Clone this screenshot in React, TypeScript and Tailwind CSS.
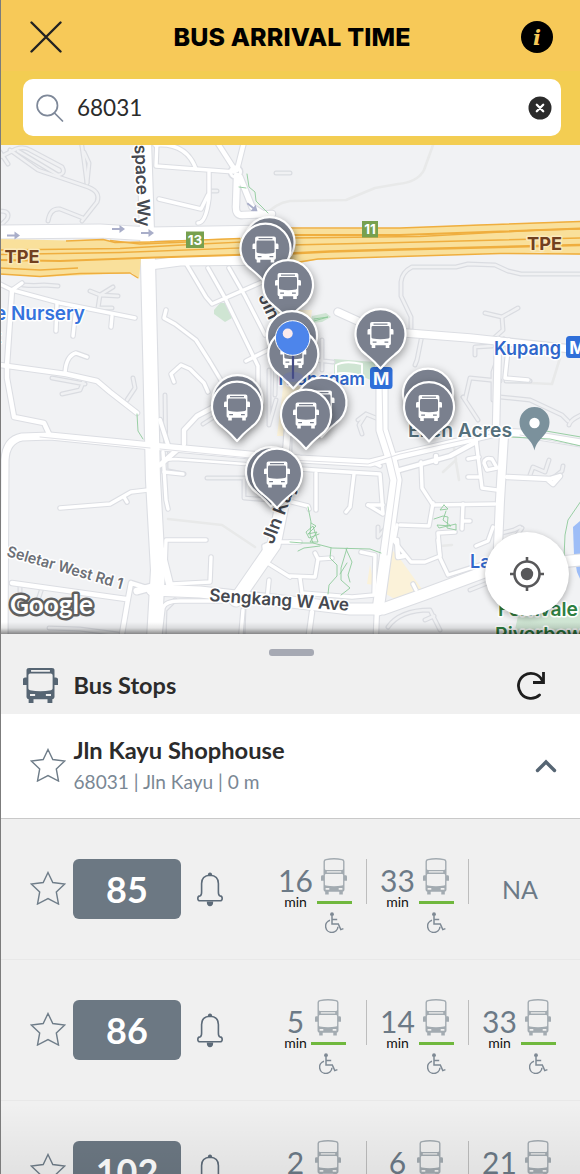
import React from "react";

type Road = { d: string; w: number };

const lanes: string[] = [
  "M0 157 L16 149 Q24 146 30 150 L62 167 Q66 174 58 175 L18 151",
  "M10 150 L38 170 L88 187 Q101 192 97 202 L82 221",
  "M48 221 Q50 208 60 209 L83 218",
  "M81 140 L84 160 L87 183",
  "M84 152 L89 163 L87 183",
  "M0 152 L8 164",
  "M0 211 Q11 211 7 219 L0 226",
  "M23 285 Q34 286 44 285 L58 286",
  "M90 291 L100 295 L118 296 M113 287 L100 295 L98 308 L112 308",
  "M52 378 L85 384 M62 394 L80 390 L85 378",
  "M133 378 L135 388 L127 400",
  "M276 173 L290 173",
  "M209 191 L217 191",
  "M581 274 L521 274 L508 271 L495 265 L468 264 L456 267 L412 267 Q402 272 401 282 L401 296 L411 317 L411 330",
  "M485 313 L502 317 L518 308 M502 317 L503 330 L494 338",
  "M422 335 L417 360 L415 365",
  "M475 355 L475 347 L492 346",
  "M504 339 L520 350",
  "M465 400 L470 378 L500 381 M463 397 L478 420",
  "M502 346 L493 372 L493 400",
  "M506 381 L530 381 M500 397 L530 400 L562 415 L568 421",
  "M358 420 L366 414 L376 418 M366 414 L359 425 L362 434",
  "M530 475 L533 467 L545 472 L549 460 M552 479 L562 471 L563 466",
  "M378 527 L378 537 L384 530",
  "M165 395 L166 470 M163 470 L184 474",
  "M207 478 L245 478 M244 480 L244 498 L270 500",
  "M276 400 L269 425 M269 370 L269 425 M276 360 L275 395",
  "M315 360 L333 362 M322 340 L322 370",
  "M388 627 Q400 610 430 610 L440 630 M425 620 L434 616",
  "M49 628 L80 629 L118 634 M20 584 L20 597 M42 588 L38 600",
  "M470 590 L500 578 M515 538 L522 528",
  "M290 421 L290 455 M233 405 L203 424",
  "M243 634 L244 607 M164 640 L165 610 L175 600",
  "M569 425 Q570 420 581 415",
  "M502 533 L514 530 L520 527",
];

const roads: Road[] = [
  { d: "M157 140 L156 166 L235 172", w: 3 },
  { d: "M155 145 Q186 142 196 169", w: 3 },
  { d: "M209 172 L209 198 Q206 223 198 223", w: 3 },
  { d: "M159 199 L201 209 L208 195", w: 3 },
  { d: "M217 142 L235 170", w: 4 },
  { d: "M244 142 L237 170", w: 4 },
  { d: "M237 176 L236 205 Q235 216 243 215 L272 214", w: 6 },
  { d: "M240 177 L252 207 L270 218", w: 5 },
  { d: "M187 265 L206 297 L212 304 L262 282", w: 3 },
  { d: "M208 268 L225 298 L258 366 L258 400", w: 3 },
  { d: "M229 268 L245 296 L265 335", w: 3 },
  { d: "M246 361 L270 349", w: 3 },
  { d: "M166 310 L164 318 L175 324 L196 340 L210 362 L222 382", w: 3 },
  { d: "M174 382 L171 374 L181 365 L190 369 L204 383 L208 392", w: 3 },
  { d: "M0 284 L12 290 L60 303 L135 318", w: 3 },
  { d: "M12 290 L7 365 L7 378 L14 417 L44 423 L50 436", w: 4 },
  { d: "M12 290 L22 283", w: 3 },
  { d: "M57 303 L56 331 M76 308 L73 336 M112 316 L111 327", w: 3 },
  { d: "M0 365 L66 374 L97 381 L110 392 L137 413", w: 4 },
  { d: "M65 373 Q66 356 76 353 L87 357", w: 3 },
  { d: "M60 508 L110 504 L131 492 L148 490 M124 497 L127 502", w: 3 },
  { d: "M163 452 L166 500 L168 509", w: 3 },
  { d: "M164 472 L183 474", w: 3 },
  { d: "M165 568 L166 540 L206 540", w: 3 },
  { d: "M211 557 L210 582 L172 584", w: 3 },
  { d: "M12 583 L126 599 M131 583 L128 599 L122 634 M131 583 L150 589", w: 4 },
  { d: "M184 444 L184 430 L197 416 L214 407", w: 4 },
  { d: "M160 634 L163 608 Q165 601 180 601 L225 601", w: 3 },
  { d: "M243 610 L241 634", w: 3 },
  { d: "M165 460 L175 459 L245 464", w: 2 },
  { d: "M338 312 L380 331 L470 338 L581 350", w: 7 },
  { d: "M498 340 L496 430", w: 6 },
  { d: "M509 340 L505 378 L528 380", w: 3 },
  { d: "M316 473 L316 510 M354 474 L350 507 L346 512", w: 3 },
  { d: "M300 469 L330 471 L380 474 L383 514 L368 505", w: 3 },
  { d: "M421 462 L422 488 L433 505 L495 504", w: 3 },
  { d: "M400 525 L429 526 L433 503", w: 3 },
  { d: "M463 504 L462 529 M463 521 L470 521", w: 3 },
  { d: "M397 525 L394 541 L411 562 L425 562 L440 556 L438 533 L455 532", w: 3 },
  { d: "M438 540 L440 558 L448 575 L480 565", w: 3 },
  { d: "M397 540 L398 557 L404 556", w: 4 },
  { d: "M376 464 L380 466", w: 3 },
  { d: "M396 471 L450 456 L476 442 M436 456 L436 462", w: 4 },
  { d: "M476 440 L482 488 L497 490 M468 459 L479 457 M468 477 L480 477", w: 3 },
  { d: "M507 477 L550 479 L560 476 L553 484 L547 479", w: 4 },
  { d: "M484 463 Q485 457 492 459 L497 468 L487 470 Z", w: 3 },
  { d: "M476 546 L488 541 L493 527", w: 3 },
  { d: "M290 542 L300 542 M315 553 L318 559 L315 577 L290 576 M318 559 L332 558", w: 3 },
  { d: "M361 552 L375 555 L374 595 L352 597 L302 593 L300 578", w: 3 },
  { d: "M264 546 L266 562 L290 577 M266 545 L275 542 L290 542 M267 600 L269 580", w: 3 },
  { d: "M312 612 L309 634 M377 608 L376 634", w: 4 },
  { d: "M368 505 L383 505", w: 3 },
  { d: "M284 500 L308 506 L309 509", w: 3 },
  { d: "M416 590 L413 584", w: 3 },
];

const avenues: Road[] = [
  { d: "M4 640 L5 460 Q6 440 22 437 L50 436 L152 446 L250 455 L300 459 L370 463 L398 456 L500 432 L520 433 L581 443", w: 7 },
  { d: "M160 420 L168 445", w: 4 },
  { d: "M160 465 L178 449", w: 5 },
  { d: "M382 380 L382 430 L390 455 L396 480 L385 560 L378 610", w: 11 },
  { d: "M283 500 L274 545 L236 600", w: 13 },
  { d: "M288 425 L283 490", w: 6 },
  { d: "M152 590 L200 592 L300 603 L350 609 L383 609 L425 594 L495 568 L581 560", w: 11 },
  { d: "M504 435 L500 500 L497 570", w: 8 },
  { d: "M155 586 L137 591 M161 550 L170 586", w: 7 },
  { d: "M144 140 L148 262 L151 390 L153 480 L158 570 L154 640", w: 14 },
  { d: "M0 232 L100 231 L150 234 L270 232", w: 13 },
  { d: "M150 265 L180 261 L270 260", w: 9 },
];

const greens: string[] = [
  "M247 174 L249 187 L255 192 L256 201 L268 213 M239 187 L246 188",
  "M137 414 L138 431 L143 439",
  "M308 507 L311 522 L310 535 L313 543 L332 548 L370 549 L381 553",
  "M311 523 L316 526 L308 534 L317 532 L310 542 L318 542 L313 526 L306 532 L309 538 L319 534",
  "M290 542 L303 543 L313 543 M298 551 L304 548 L320 546",
  "M331 548 L330 558 L337 565 L337 576 L329 585 L328 594 M347 548 L341 568 L341 580 L350 588 L341 595 M346 549 L352 562 L348 575 L350 582 M340 574 L347 563",
  "M444 505 L440 510 L448 509 L444 505 M446 511 L443 520 L451 526 L437 525 L439 528 L456 524 L456 530 L447 528 L448 517 L443 516 L434 519",
  "M581 501 L568 520 L565 535 L564 558 M510 437 L550 439 L581 446 M540 430 L581 437",
  "M314 319 L328 317 L314 321",
];

const busPath =
  "M4.5 0H21.5Q23.4 0 23.4 1.8V7H24.4Q26 7 26 8.4V12.6H23.4V21.6Q23.4 23.2 21.8 23.2V26H18.2V23.2H7.8V26H4.200V23.2Q2.6 23.2 2.6 21.6V12.6H0V8.4Q0 7 1.6 7H2.6V1.8Q2.6 0 4.5 0ZM6 1.5V2.7H20V1.5ZM5.400 4Q4 4 4 5.400V15.200Q4 16.200 5.200 16.500Q13 18 20.800 16.500Q22 16.200 22 15.200V5.400Q22 4 20.600 4ZM5.2 19.4V20.8H9V19.4ZM17 19.4V20.8H20.8V19.4Z";

const pins: [number, number, boolean][] = [
  [269.5, 242, false],
  [265.5, 248.5, true],
  [288, 285, true],
  [292, 336, false],
  [293.3, 354, true],
  [380.5, 334, true],
  [237.5, 400, false],
  [237, 406.5, true],
  [321.5, 402.5, true],
  [306, 414.5, true],
  [428, 393.5, false],
  [429, 407, true],
  [271, 472, false],
  [277, 473.5, true],
];

function Pin({ x, y, bus }: { x: number; y: number; bus: boolean }) {
  return (
    <g transform={`translate(${x} ${y})`} className="drop-shadow-[1px_3px_4px_rgba(0,0,0,0.35)]">
      <path
        d="M0 34.5 L-6 28 Q-9 25 -14.5 20.5 A25 25 0 1 1 14.5 20.5 Q9 25 6 28 Z"
        fill="#7a808e"
        stroke="#fff"
        strokeWidth="2.2"
        strokeLinejoin="round"
      />
      {bus && <path d={busPath} transform="translate(-13 -12)" fill="#fff" fillRule="evenodd" />}
    </g>
  );
}

function MapLabel(props: React.SVGProps<SVGTextElement>) {
  return (
    <text
      fontFamily="Inter, 'Liberation Sans', sans-serif"
      fontWeight={600}
      fontSize={18}
      stroke="#fff"
      strokeWidth={3}
      strokeLinejoin="round"
      paintOrder="stroke"
      lengthAdjust="spacingAndGlyphs"
      {...props}
    />
  );
}

function Arrow({ x, y, r = 0 }: { x: number; y: number; r?: number }) {
  return (
    <g transform={`translate(${x} ${y}) rotate(${r})`} fill="#a9aec9">
      <path d="M-6 -0.9H1.5V-4L7 0L1.5 4V0.9H-6Z" />
    </g>
  );
}

function StreetMap() {
  return (
    <svg viewBox="0 145 580 489" width="580" height="489" className="block" fill="none" strokeLinecap="round" strokeLinejoin="round">
      <rect x="0" y="145" width="580" height="489" fill="#f1f2f4" />
      <g fill="#cfe5d3">
        <path d="M214 310 L220 303 L226 303 L232 318 L225 322 L214 314Z" />
        <path d="M312 316 L326 313 L331 317 L322 322 L310 323Z" />
        <path d="M334 359 L375 362 L375 382 L366 378 L334 374Z" />
        <path d="M518 616 L581 606 V634 H514Z" />
      </g>
      <g fill="#fbf2d9">
        <path d="M268 310 H312 L300 400 L285 436 H277 L284 380Z" />
        <path d="M389 547 L398 556 L424 592 L398 601 L386 594Z M370 565 L374 585 L367 584Z" />
      </g>
      <path d="M573 527 L581 520 V581 L577 572 L574 555Z" fill="#9dbdf7" />
      <g strokeWidth="2.6" stroke="#e8e9e9">
        <path d="M433 145 L424 170 Q418 182 398 184 L375 188 L346 200 L290 201 Q275 203 262 218" />
        <path d="M168 519 L222 525 L255 547" />
        <path d="M454 448 L456 460 L443 472 M456 462 L459 480" />
        <path d="M560 358 L552 384 L508 382 M440 546 L452 545" />
      </g>
      <g strokeWidth="5" stroke="#dadce1">
        {lanes.map((d) => <path key={d} d={d} />)}
      </g>
      <g strokeWidth="2.6" stroke="#f0f1f3">
        {lanes.map((d) => <path key={d} d={d} />)}
      </g>
      <g stroke="#dcdee3">
        {roads.map((r) => <path key={r.d} d={r.d} strokeWidth={r.w + 2.6} />)}
        <circle cx="235.5" cy="172" r="5" strokeWidth="6" />
        {avenues.map((r) => <path key={r.d} d={r.d} strokeWidth={r.w + 2.2} />)}
      </g>
      <g stroke="#fff">
        {roads.map((r) => <path key={r.d} d={r.d} strokeWidth={r.w + 0.4} />)}
        <circle cx="235.5" cy="172" r="5" strokeWidth="3" />
        {avenues.map((r) => <path key={r.d} d={r.d} strokeWidth={r.w} />)}
      </g>
      <g stroke="#e0e1e6" strokeWidth="1">
        <path d="M40 437 L150 448 M160 449 L250 458 L368 464 L400 454 L495 433" />
        <path d="M382 382 L383 430 L391 455 L397 480 L387 555 M520 435 L580 446" />
      </g>
      <path d="M336 374 V365 Q345 360 362 364 V376 Q345 371 336 374Z" stroke="#fff" strokeWidth="2" />
      <g stroke="#8fcb9b" strokeWidth="0.9">
        {greens.map((d) => <path key={d} d={d} />)}
      </g>

      <path
        d="M0 239 L70 240.5 L103 239 L115 242.5 L240 238 L270 229 L400 228 L470 225 L581 221 V255 L540 252.5 L380 257 L315 260 L300 263 L270 254 L155 258 L141 258.5 L139 279 L132 273 L40 277 L0 274Z"
        fill="#f9e09b"
      />
      <g stroke="#efae3f" strokeWidth="1.4" strokeLinecap="butt">
        <path d="M66 241 L103 239.5 L115 242.5 L150 242 L240 238.5" />
        <path d="M0 250 L120 248.5 L200 244 L265 241" />
        <path d="M0 254.5 L120 252.5 L265 247" />
        <path d="M0 260 L60 261 L140 258 L250 254.5" strokeWidth="2" />
        <path d="M0 274 L40 276.5 L80 273.5 L130 273 L138 278" />
        <path d="M0 268 L40 270 L78 268" />
        <path d="M110 240.5 L140 244 L200 241.5" />
        <path d="M290 228 L400 228 L480 225 L581 221.5" />
        <path d="M290 235 L400 235 L500 231.5 L581 228.5" strokeWidth="2" />
        <path d="M290 238 L420 236.5 L540 230 L581 229" />
        <path d="M290 245 L380 243 L500 240 L581 238" />
        <path d="M290 253.5 L330 251.5 L400 249.5 L500 247 L581 245" strokeWidth="2.4" />
        <path d="M296 262.5 L318 259 L400 256.5 L500 253.5 L581 254" />
      </g>

      <Arrow x={13} y={235.5} />
      <Arrow x={118} y={229} />
      <Arrow x={147} y={233} />
      <Arrow x={252} y={207} r={38} />

      <g fontFamily="Inter, 'Liberation Sans', sans-serif" fontWeight="700" fontSize="13.5" textAnchor="middle">
        <rect x="186" y="231.5" width="18" height="16.5" fill="#77a04e" />
        <text x="195" y="244.7" fill="#fff">13</text>
        <rect x="362" y="221" width="16" height="16.5" fill="#77a04e" />
        <text x="370" y="234.2" fill="#fff">11</text>
      </g>
      <g fill="#71401f">
        <MapLabel x={4.5} y={262.5} fontWeight={700} fontSize={18} stroke="#fbeabb" textLength={35}>TPE</MapLabel>
        <MapLabel x={527} y={249.5} fontWeight={700} fontSize={18} stroke="#fbeabb" textLength={35}>TPE</MapLabel>
      </g>
      <MapLabel transform="translate(134.5 145) rotate(87.5)" fill="#45484f" fontSize={17.5} textLength={82}>space Wy</MapLabel>
      <g fill="#3573dd">
        <MapLabel x={-5} y={320} textLength={90} fontSize={19}>e Nursery</MapLabel>
        <MapLabel x={-5} y={343}>t</MapLabel>
      </g>
      <g fill="#3067cb">
        <MapLabel x={494} y={354.5} textLength={67} fontSize={18.5}>Kupang</MapLabel>
        <MapLabel x={275} y={385} textLength={90} fontSize={18}>Thanggam</MapLabel>
        <MapLabel x={470} y={568}>Layar</MapLabel>
      </g>
      <g fontFamily="Inter, 'Liberation Sans', sans-serif" fontWeight="700" fontSize="17.5" textAnchor="middle">
        <rect x="370" y="367" width="22.5" height="22" rx="3.5" fill="#2f6fd9" />
        <text x="381.2" y="384.5" fill="#fff">M</text>
        <rect x="566" y="336" width="22.5" height="22" rx="3.5" fill="#2f6fd9" />
        <text x="577.5" y="353.5" fill="#fff">M</text>
      </g>
      <MapLabel x={408} y={436.5} fill="#55707c" textLength={104} fontSize={19}>Ellen Acres</MapLabel>
      <path d="M534.500 450.500 C532 438 519.500 435 519.500 422 A15 15 0 0 1 549.500 422 C549.500 435 537 438 534.500 450.500Z" fill="#7b919c" />
      <circle cx="534.500" cy="423" r="5.200" fill="#fff" />
      <MapLabel transform="translate(6 556) rotate(16)" fill="#6c7077" fontSize={15} textLength={120}>Seletar West Rd 1</MapLabel>
      <MapLabel transform="translate(209 601) rotate(4)" fill="#45484f" fontSize={17.5} textLength={140}>Sengkang W Ave</MapLabel>
      <MapLabel transform="translate(273 545) rotate(-69)" fill="#45484f" fontSize={18} textLength={76}>Jln Kayu</MapLabel>
      <MapLabel transform="translate(258 297) rotate(65)" fill="#45484f" fontSize={18}>Jln</MapLabel>
      <g fill="#2f7f42">
        <MapLabel x={498} y={616} textLength={80} fontSize={19}>Fernvale</MapLabel>
        <MapLabel x={495} y={641} textLength={88} fontSize={19}>Riverbow</MapLabel>
      </g>
      <text x="10" y="613.5" fontFamily="Lato, sans-serif" fontWeight="700" fontSize="26.500" fill="#fff" stroke="#5f5f5f" strokeWidth="5" paintOrder="stroke" textLength="83" lengthAdjust="spacingAndGlyphs">
        Google
      </text>

      {pins.map(([x, y, bus]) => <Pin key={`${x}-${y}`} x={x} y={y} bus={bus} />)}

      <ellipse cx="293" cy="377" rx="10" ry="5" fill="#6370b5" opacity="0.35" />
      <path d="M293 354 V378" stroke="#454c86" strokeWidth="2.200" />
      <circle cx="292.700" cy="338" r="17.300" fill="#4d85eb" stroke="#fff" strokeWidth="1" />
      <circle cx="287.700" cy="333.500" r="5" fill="#fbeaec" />
    </svg>
  );
}

function BusIcon() {
  return (
    <svg viewBox="0 0 26 26" className="h-[35px] w-[35px]" fill="#566573" fillRule="evenodd">
      <path d={busPath} />
    </svg>
  );
}

function Star() {
  return (
    <svg viewBox="0 0 36 34" className="mb-[2px] h-[34px] w-[36px]" fill="none" stroke="#6f7d89" strokeWidth="1.4">
      <path d="M18 1.500 L22.800 11.500 L34.700 13 L26.300 21 L28.500 33 L18 27.600 L7.500 33 L9.700 21 L1.300 13 L13.200 11.500Z" />
    </svg>
  );
}

function Bell() {
  return (
    <svg viewBox="0 0 26 35" className="h-[35px] w-[26px]" fill="none" stroke="#5d6b79" strokeWidth="1.600">
      <path d="M4.600 20V11.500Q4.600 3.600 13 3.200Q21.400 3.600 21.400 11.500V20Q21.400 23.700 23 23.900Q25.200 24.100 25.200 26.500Q25.200 28.800 23 28.800H3Q0.800 28.800 0.800 26.500Q0.800 24.100 3 23.900Q4.600 23.700 4.600 20Z" />
      <path d="M10.800 3.300Q10.800 0.400 13 0.400Q15.200 0.400 15.200 3.300Z M9.800 29.400H16.200Q16.200 34.200 13 34.200Q9.800 34.200 9.800 29.400Z" fill="#5d6b79" stroke="none" />
    </svg>
  );
}

function DoubleDecker() {
  return (
    <svg viewBox="0 0 26 37" className="h-[37px] w-[26px]" fill="#a3abb1" fillRule="evenodd">
      <path d="M4.800 1Q13 -0.800 21.200 1Q23.500 1.400 23.500 3.600V17.300H24.600Q26 17.300 26 18.700V22.800H23.500V31.500Q23.500 33.500 21.800 33.700V36.500H18.300V33.700H7.700V36.500H4.200V33.700Q2.500 33.500 2.500 31.500V22.800H0V18.700Q0 17.300 1.400 17.300H2.500V3.600Q2.500 1.400 4.800 1ZM5.200 2.200Q3.900 2.500 3.900 3.700V10.800Q3.900 12 5.200 12H20.800Q22.100 12 22.100 10.800V3.700Q22.100 2.500 20.800 2.200Q13 0.800 5.200 2.200ZM5.800 13.300V14.500H20.200V13.300ZM5 16Q3.900 16 3.900 17.100V26.500Q3.900 27.400 5 27.600Q13 28.800 21 27.600Q22.100 27.400 22.100 26.500V17.100Q22.100 16 21 16ZM4.600 30V31.800H8.300V30ZM17.700 30V31.800H21.400V30Z" />
    </svg>
  );
}

function Wheelchair() {
  return (
    <svg viewBox="0 0 19 21" className="h-[21px] w-[19px]" fill="none" stroke="#7e8994" strokeWidth="1.500">
      <circle cx="7" cy="2.200" r="1.900" fill="#7e8994" stroke="none" />
      <path d="M7 4V12H13.300L15.800 17.600L18.400 16.600 M7.300 7.600H12.200" />
      <path d="M5 8.300A6.200 6.200 0 1 0 13 14.800" />
    </svg>
  );
}

function Arrival({ minutes, last }: { minutes: number | null; last: boolean }) {
  return (
    <div className="relative flex h-[78px] w-[102px] items-start justify-center">
      {minutes === null ? (
        <span className="pt-[14px] text-[25px] leading-[32px] text-[#6c7a87]">NA</span>
      ) : (
        <div className="flex gap-1 pr-[2px]">
          <div className="flex flex-col items-center pt-[6px]">
            <span className="text-[30px] leading-[30px] text-[#6c7a87]">{minutes}</span>
            <span className="text-[14px] leading-[14px] text-[#111]">min</span>
          </div>
          <div className="flex w-[35px] flex-col items-center">
            <div className="-mt-px">
              <DoubleDecker />
            </div>
            <div className="mt-[6px] h-[3px] w-full bg-[#70b83e]" />
            <div className="mt-[8px]">
              <Wheelchair />
            </div>
          </div>
        </div>
      )}
      {!last && <div className="absolute top-0 right-0 h-[45px] w-[1.5px] bg-[#bdbdbd]" />}
    </div>
  );
}

const services: { no: string; next: (number | null)[] }[] = [
  { no: "85", next: [16, 33, null] },
  { no: "86", next: [5, 14, 33] },
  { no: "102", next: [2, 6, 21] },
];

export default function App() {
  return (
    <div className="relative flex h-[1174px] w-[580px] flex-col overflow-hidden bg-[#f0f0f0] font-[Lato,sans-serif] text-[#2b2b2b]">
      <header className="flex h-[71px] shrink-0 items-center justify-between bg-[#f7c958] pt-[3px] pr-[27px] pl-[30px]">
        <svg viewBox="0 0 32 32" className="h-8 w-8" stroke="#222" strokeWidth="2.400" strokeLinecap="round">
          <path d="M1.500 1.500 L30.500 30.500 M30.500 1.500 L1.500 30.500" />
        </svg>
        <h1 className="pt-[2px] pl-px font-[Inter,sans-serif] text-[25px] font-extrabold tracking-[0.005em] whitespace-nowrap text-black">BUS ARRIVAL TIME</h1>
        <div className="flex h-8 w-8 items-center justify-center rounded-full bg-black">
          <span className="font-['DejaVu_Serif',serif] text-[21px] leading-none font-bold text-[#f7c958] italic">i</span>
        </div>
      </header>
      <div className="h-[74px] shrink-0 bg-[#f3cd52] pt-[8px] pl-[23px]">
        <div className="flex h-[57px] w-[538px] items-center rounded-[10px] bg-white pr-[9px] pl-[13px]">
          <svg viewBox="0 0 28 28" className="h-7 w-7" fill="none" stroke="#7e8899" strokeWidth="1.700" strokeLinecap="round">
            <circle cx="11.300" cy="11.500" r="10.200" />
            <path d="M18.500 19 L26.500 27" />
          </svg>
          <span className="ml-[13px] flex-1 text-[22.500px]">68031</span>
          <svg viewBox="0 0 24 24" className="h-6 w-6" stroke="#fff" strokeWidth="2.300" strokeLinecap="round">
            <circle cx="12" cy="12" r="11.500" fill="#2b2b2b" stroke="none" />
            <path d="M8.800 8.800 L15.200 15.200 M15.200 8.800 L8.800 15.200" />
          </svg>
        </div>
      </div>

      <section className="relative h-[489px] shrink-0 overflow-hidden">
        <StreetMap />
        <button className="absolute right-[11px] bottom-[18px] flex h-[84px] w-[84px] items-center justify-center rounded-full bg-white shadow-[0_2px_6px_rgba(0,0,0,0.3)]">
          <svg viewBox="0 0 34 34" className="h-[34px] w-[34px]" fill="none" stroke="#58585a" strokeWidth="2.600">
            <circle cx="17" cy="17" r="12.500" />
            <circle cx="17" cy="17" r="6.200" fill="#58585a" stroke="none" />
            <path d="M17 0V5 M17 29V34 M0 17H5 M29 17H34" />
          </svg>
        </button>
        <div className="absolute inset-x-0 bottom-0 h-[12px] bg-linear-to-b from-transparent via-black/10 to-black/45" />
      </section>

      <section className="flex h-[80px] shrink-0 flex-col">
        <div className="mt-[15px] ml-[269px] h-[7px] w-[45px] rounded-[3px] bg-[#a6a9b3]" />
        <div className="mt-[12px] flex h-[35px] items-center pr-[34px] pl-[23px]">
          <BusIcon />
          <h2 className="ml-[15.500px] flex-1 text-[23.500px] font-bold">Bus Stops</h2>
          <svg viewBox="0 0 30 30" className="h-[30px] w-[30px]" fill="none" stroke="#1d1d1d" strokeWidth="2.800">
            <path d="M23.500 24A12.500 12.500 0 1 1 26 9" strokeLinecap="round" />
            <path d="M27.500 1V11.500H17" />
          </svg>
        </div>
      </section>

      <section className="flex h-[105px] shrink-0 items-center border-b border-[#c9c9c9] bg-white pr-[23px] pl-[30px]">
        <Star />
        <div className="ml-[7.500px] flex-1">
          <h3 className="text-[23.700px] leading-[32px] font-bold">Jln Kayu Shophouse</h3>
          <p className="text-[19.100px] leading-[32px] text-[#7a8794]">68031 | Jln Kayu | 0 m</p>
        </div>
        <svg viewBox="0 0 22 14" className="h-[14px] w-[22px]" fill="none" stroke="#566573" strokeWidth="3.400" strokeLinecap="round">
          <path d="M2.500 11.500 L11 3 L19.500 11.500" />
        </svg>
      </section>

      <main className="flex flex-col">
        {services.map((s) => (
          <article key={s.no} className="flex h-[141px] shrink-0 items-start border-b border-[#e8e8e8] pt-[40px] pl-[30px]">
            <div className="flex h-[60px] items-center">
              <Star />
              <div className="ml-[7px] flex h-[60px] w-[108px] items-center justify-center rounded-[6px] bg-[#6c7883] text-[36px] font-bold text-white">
                {s.no}
              </div>
              <div className="ml-[15.500px]">
                <Bell />
              </div>
            </div>
            <div className="ml-[42.500px] flex">
              {s.next.map((m, i) => (
                <Arrival key={i} minutes={m} last={i === s.next.length - 1} />
              ))}
            </div>
          </article>
        ))}
      </main>
      <div className="pointer-events-none absolute inset-x-0 bottom-0 h-[70px] bg-linear-to-b from-transparent to-black/6" />
      <div className="pointer-events-none absolute inset-y-0 left-0 w-px bg-[#7c7c7c]" />
    </div>
  );
}
